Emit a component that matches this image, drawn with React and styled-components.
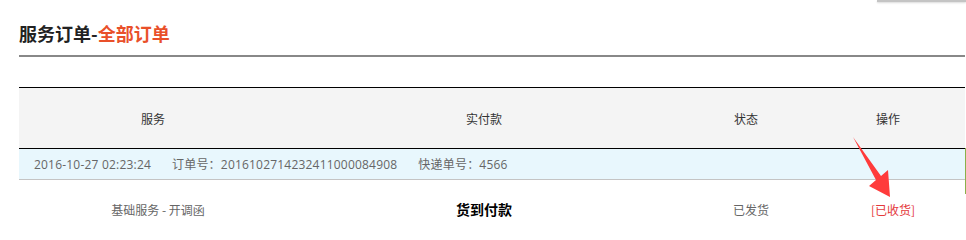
import React from 'react'
import styled, { createGlobalStyle } from 'styled-components'

const GlobalStyle = createGlobalStyle`
  html, body {
    margin: 0;
    padding: 0;
    background: #fff;
  }
  body {
    font-family: "Noto Sans CJK SC", "Noto Sans", sans-serif;
    font-size: 12px;
    color: #333;
  }
  * {
    box-sizing: border-box;
  }
`

const Page = styled.div`
  position: relative;
  padding: 21px 1px 0 19px;
  height: 238px;
  overflow: hidden;
`

const TopShadow = styled.div`
  position: absolute;
  top: 0;
  right: 0;
  width: 89px;
  height: 2px;
  background: #c4c4c4;
  box-shadow: 0 1px 2px rgba(0, 0, 0, 0.15);
`

const Title = styled.h2`
  margin: 0;
  font-size: 18px;
  line-height: 24px;
  font-weight: bold;
  color: #222;
  padding-bottom: 10px;
  border-bottom: 2px solid #888;
`

const Highlight = styled.span`
  color: #e9502a;
`

const Table = styled.div`
  position: relative;
  margin-top: 30px;
`

const Row = styled.div`
  display: grid;
  grid-template-columns: 268px 394px 130px 154px;
  align-items: center;
  height: ${p => p.height}px;
  background: ${p => p.bg || 'transparent'};
`

const HeadRow = styled(Row)`
  border-top: 1px solid #000;
  border-bottom: 1px solid #000;
`

const Cell = styled.div`
  text-align: center;
  padding-left: ${p => p.shift || 0}px;
  color: ${p => p.color || '#666'};
  font-size: ${p => (p.strong ? 14 : 12)}px;
  font-weight: ${p => (p.strong ? 'bold' : 'normal')};
`

const HeadCell = styled.div`
  text-align: center;
  color: #333;
`

const InfoRow = styled.div`
  display: flex;
  align-items: center;
  gap: 21px;
  height: 31px;
  padding-left: 15px;
  background: #e8f7fd;
  border-bottom: 1px solid #c4c4c4;
  color: #666;
  font-family: "Open Sans", "Noto Sans CJK SC", sans-serif;
  letter-spacing: 0.2px;
`

const GreenEdge = styled.div`
  position: absolute;
  right: -1px;
  top: 61px;
  width: 1px;
  height: 46px;
  background: #8bb04a;
`

const Arrow = styled.svg`
  position: absolute;
  left: 0;
  top: 0;
  pointer-events: none;
`

const headers = ['服务', '实付款', '状态', '操作']

export default function App() {
  return (
    <>
      <GlobalStyle />
      <Page>
        <TopShadow />
        <Title>
          服务订单-<Highlight>全部订单</Highlight>
        </Title>
        <Table>
          <HeadRow height={62} bg="#f4f4f4">
            {headers.map(h => (
              <HeadCell key={h}>{h}</HeadCell>
            ))}
          </HeadRow>
          <InfoRow>
            <span>2016-10-27 02:23:24</span>
            <span>订单号：2016102714232411000084908</span>
            <span>快递单号：4566</span>
          </InfoRow>
          <Row height={58}>
            <Cell shift={10}>基础服务 - 开调函</Cell>
            <Cell strong color="#000">货到付款</Cell>
            <Cell shift={10}>已发货</Cell>
            <Cell shift={10} color="#e4393c">[已收货]</Cell>
          </Row>
          <GreenEdge />
        </Table>
        <Arrow width="966" height="238" viewBox="0 0 966 238">
          <polygon
            points="853,137 881,176 888,170 890,197 869,186 876,180"
            fill="#ff3b3b"
          />
        </Arrow>
      </Page>
    </>
  )
}
